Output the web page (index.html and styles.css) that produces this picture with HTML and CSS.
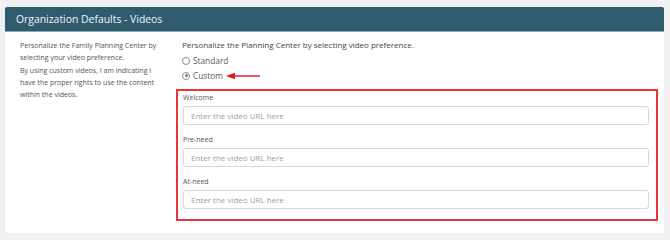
FILE: index.html
```html
<!DOCTYPE html>
<html>
<head>
<meta charset="utf-8">
<link rel="stylesheet" href="styles.css">
</head>
<body>
<div class="card">
  <div class="card-header">Organization Defaults - Videos</div>
  <div class="card-body">
    <div class="side">
      <p>Personalize the Family Planning Center by selecting your video preference.</p>
      <p>By using custom videos, I am indicating I have the proper rights to use the content within the videos.</p>
    </div>
    <div class="main">
      <div class="intro">Personalize the Planning Center by selecting video preference.</div>
      <label class="radio first"><span class="dot"></span>Standard</label>
      <label class="radio"><span class="dot checked"></span>Custom
        <svg class="arrow" width="34" height="8" viewBox="0 0 34 8"><path d="M8 4 H34" stroke="#e0161d" stroke-width="1.4"/><path d="M0 4 L9 0.8 L9 7.2 Z" fill="#e0161d"/></svg>
      </label>
      <div class="urls">
        <div class="field">
          <div class="lbl">Welcome</div>
          <div class="input">Enter the video URL here</div>
        </div>
        <div class="field">
          <div class="lbl">Pre-need</div>
          <div class="input">Enter the video URL here</div>
        </div>
        <div class="field">
          <div class="lbl">At-need</div>
          <div class="input">Enter the video URL here</div>
        </div>
      </div>
    </div>
  </div>
</div>
</body>
</html>
```

FILE: styles.css
```css
html, body { margin: 0; }
body {
  background: #f1f1f1;
  padding: 7px 6px 0 5px;
  font-family: "Open Sans", "Noto Sans", sans-serif;
}
.card {
  background: #fff;
  box-shadow: 0 0 1px 0 #cfcfcf;
  border-radius: 2px;
  height: 226px;
  box-sizing: border-box;
}
.card-header {
  background: #2f5b6f;
  color: #f4f7f8;
  height: 25px;
  line-height: 25px;
  font-size: 10.4px;
  padding-left: 11px;
  border-radius: 2px 2px 0 0;
  border-bottom: 1px solid #8fa6b1;
  box-sizing: border-box;
}
.card-body {
  display: flex;
  padding: 6px 6px 12px 0;
}
.side {
  width: 171px;
  box-sizing: border-box;
  padding: 2px 16px 0 15px;
  color: #555;
  font-size: 7px;
  line-height: 12px;
}
.side p { margin: 0 0 1px; }
.main { flex: 1; }
.intro {
  font-size: 8px;
  line-height: 14px;
  color: #444;
  padding-left: 6px;
}
.radio {
  display: flex;
  align-items: center;
  height: 15px;
  font-size: 8.3px;
  color: #5a5a5a;
  padding-left: 6px;
}
.radio.first { margin-top: 1px; }
.dot {
  width: 6px;
  height: 6px;
  border: 1px solid #8a8a8a;
  border-radius: 50%;
  margin-right: 3px;
  margin-left: 0;
  box-sizing: content-box;
  position: relative;
}
.dot.checked::after {
  content: "";
  position: absolute;
  left: 1.5px; top: 1.5px;
  width: 3px; height: 3px;
  border-radius: 50%;
  background: #777;
}
.arrow { margin-left: 3px; }
.urls {
  margin-top: 6px;
  border: 2px solid #e8353b;
  padding: 1px 7px 10px 5px;
}
.field + .field { margin-top: 9px; }
.lbl {
  font-size: 7px;
  line-height: 12px;
  color: #555;
}
.input {
  margin-top: 2px;
  height: 19px;
  box-sizing: border-box;
  border: 1px solid #d8d8d8;
  border-radius: 3px;
  font-size: 8px;
  line-height: 17px;
  color: #a0a0a0;
  padding-left: 7px;
}
```
